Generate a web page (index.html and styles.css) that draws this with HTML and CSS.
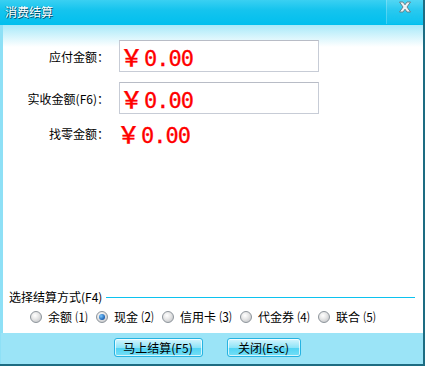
FILE: index.html
```html
<!DOCTYPE html>
<html lang="zh">
<head>
<meta charset="utf-8">
<title>消费结算</title>
<link rel="stylesheet" href="styles.css">
</head>
<body>
<div class="window">
  <div class="titlebar">
    <span class="title">消费结算</span>
    <span class="close-zone">
      <svg class="close" width="14" height="12" viewBox="0 0 14 12">
        <path d="M1.5 1 L5 1 L7 3.8 L9 1 L12.5 1 L9 6 L12.5 11 L9 11 L7 8.2 L5 11 L1.5 11 L5 6 Z" fill="#eef2f4" stroke="#5f7a84" stroke-width="0.9"/>
      </svg>
    </span>
  </div>
  <div class="body">
    <div class="fields">
      <div class="label">应付金额：</div>
      <div class="box"><span class="amount"><span class="yen">￥</span>0.00</span></div>
      <div class="label">实收金额(F6)：</div>
      <div class="box"><span class="amount"><span class="yen">￥</span>0.00</span></div>
      <div class="label">找零金额：</div>
      <div class="plain"><span class="amount"><span class="yen">￥</span>0.00</span></div>
    </div>
    <div class="group">
      <div class="legend"><span>选择结算方式(F4)</span><span class="rule"></span></div>
      <div class="radios">
        <span class="opt"><span class="radio"></span>余额<span class="num">⑴</span></span>
        <span class="opt"><span class="radio on"></span>现金<span class="num">⑵</span></span>
        <span class="opt"><span class="radio"></span>信用卡<span class="num">⑶</span></span>
        <span class="opt"><span class="radio"></span>代金券<span class="num">⑷</span></span>
        <span class="opt"><span class="radio"></span>联合<span class="num">⑸</span></span>
      </div>
    </div>
  </div>
  <div class="footer">
    <button class="btn btn-pay">马上结算(F5)</button>
    <button class="btn btn-close">关闭(Esc)</button>
  </div>
</div>
</body>
</html>
```

FILE: styles.css
```css
html, body {
  margin: 0;
  padding: 0;
  background: #ffffff;
}
body {
  font-family: "Noto Sans CJK SC", "Noto Sans", sans-serif;
  font-size: 12px;
  color: #000;
}
.window {
  width: 425px;
  height: 366px;
  display: flex;
  flex-direction: column;
  box-sizing: border-box;
  border-right: 2px solid #1d6c82;
  border-bottom: 2px solid #1d6c82;
  overflow: hidden;
}
.titlebar {
  height: 25px;
  flex: none;
  display: flex;
  align-items: flex-start;
  justify-content: space-between;
  background: linear-gradient(#3ad0f2, #15c4ee 40%, #00bfee);
}
.title {
  color: #fff;
  padding: 3px 0 0 5px;
  line-height: 18px;
  font-size: 12px;
  text-shadow: 1px 1px 0 rgba(0, 40, 60, 0.75), -1px 0 0 rgba(0, 40, 60, 0.35);
}
.close-zone {
  width: 37px;
  height: 24px;
  display: flex;
  justify-content: center;
  align-items: flex-start;
  padding-top: 1px;
  box-sizing: border-box;
  border-left: 1px solid rgba(255, 255, 255, 0.22);
  background: linear-gradient(rgba(255, 255, 255, 0.12), rgba(255, 255, 255, 0.04));
}
.body {
  flex: 1;
  display: flex;
  flex-direction: column;
  border-left: 3px solid #8ee0f6;
  background: linear-gradient(#a8e9f9, #ffffff 22px);
}
.fields {
  display: grid;
  grid-template-columns: 106px 200px;
  grid-template-rows: 32px 32px 18px;
  row-gap: 10px;
  column-gap: 10px;
  padding-top: 15px;
  align-items: center;
}
.label {
  text-align: right;
  line-height: 16px;
  padding-top: 2px;
}
.box {
  height: 32px;
  box-sizing: border-box;
  border: 1px solid #c7ccd6;
  border-top-color: #b8bcc6;
  background: #fff;
  display: flex;
  align-items: center;
  padding-left: 0;
}
.plain {
  display: flex;
  align-items: center;
  margin-left: -2px;
}
.amount {
  color: #ff0000;
  font-family: "DejaVu Sans Mono", "Liberation Mono", monospace;
  font-size: 22px;
  line-height: 24px;
  letter-spacing: -1px;
  padding-top: 2px;
  white-space: nowrap;
  -webkit-text-stroke: 0.3px #ff0000;
}
.yen {
  font-family: "Noto Sans CJK SC", sans-serif;
  font-weight: 500;
  font-size: 23px;
  letter-spacing: 0;
  margin-right: 1px;
}
.group {
  margin-top: auto;
  padding: 0 8px 0 6px;
  margin-bottom: 7px;
}
.legend {
  display: flex;
  align-items: center;
  gap: 4px;
  line-height: 16px;
}
.rule {
  flex: 1;
  height: 1px;
  background: #0cc2ef;
}
.radios {
  display: flex;
  justify-content: flex-start;
  gap: 8px;
  padding-top: 3px;
  padding-left: 21px;
}
.opt {
  display: flex;
  align-items: center;
  gap: 6px;
  line-height: 18px;
}
.num {
  margin-left: -3px;
  width: 13px;
  text-align: center;
  font-size: 12px;
}
.radio {
  width: 12px;
  height: 12px;
  box-sizing: border-box;
  border-radius: 50%;
  border: 1px solid #8d949b;
  background: radial-gradient(circle at 40% 35%, #ffffff 0, #e8e8e8 40%, #b9bcc0 100%);
  display: inline-flex;
  align-items: center;
  justify-content: center;
}
.radio.on::after {
  content: "";
  width: 6px;
  height: 6px;
  border-radius: 50%;
  background: radial-gradient(circle at 35% 35%, #7ac8ff, #1b5fb0 70%, #0d3e80);
}
.footer {
  height: 31px;
  flex: none;
  background: #9be4f7;
  border-left: 1px solid #8ee0f6;
  display: flex;
  justify-content: center;
  align-items: flex-start;
  gap: 24px;
  padding-top: 5px;
  padding-right: 10px;
  box-sizing: border-box;
}
.btn {
  height: 19px;
  padding: 0;
  font-family: "Noto Sans CJK SC", "Noto Sans", sans-serif;
  font-size: 12px;
  line-height: 16px;
  color: #000;
  border: 1px solid #26b3e2;
  border-radius: 3px;
  background: linear-gradient(#d5f5fd, #8ee4f8 50%, #4fd3f3 51%, #74def6);
  box-shadow: inset 0 0 0 1px rgba(255, 255, 255, 0.7);
}
.btn-pay { width: 89px; }
.btn-close { width: 74px; }
```
